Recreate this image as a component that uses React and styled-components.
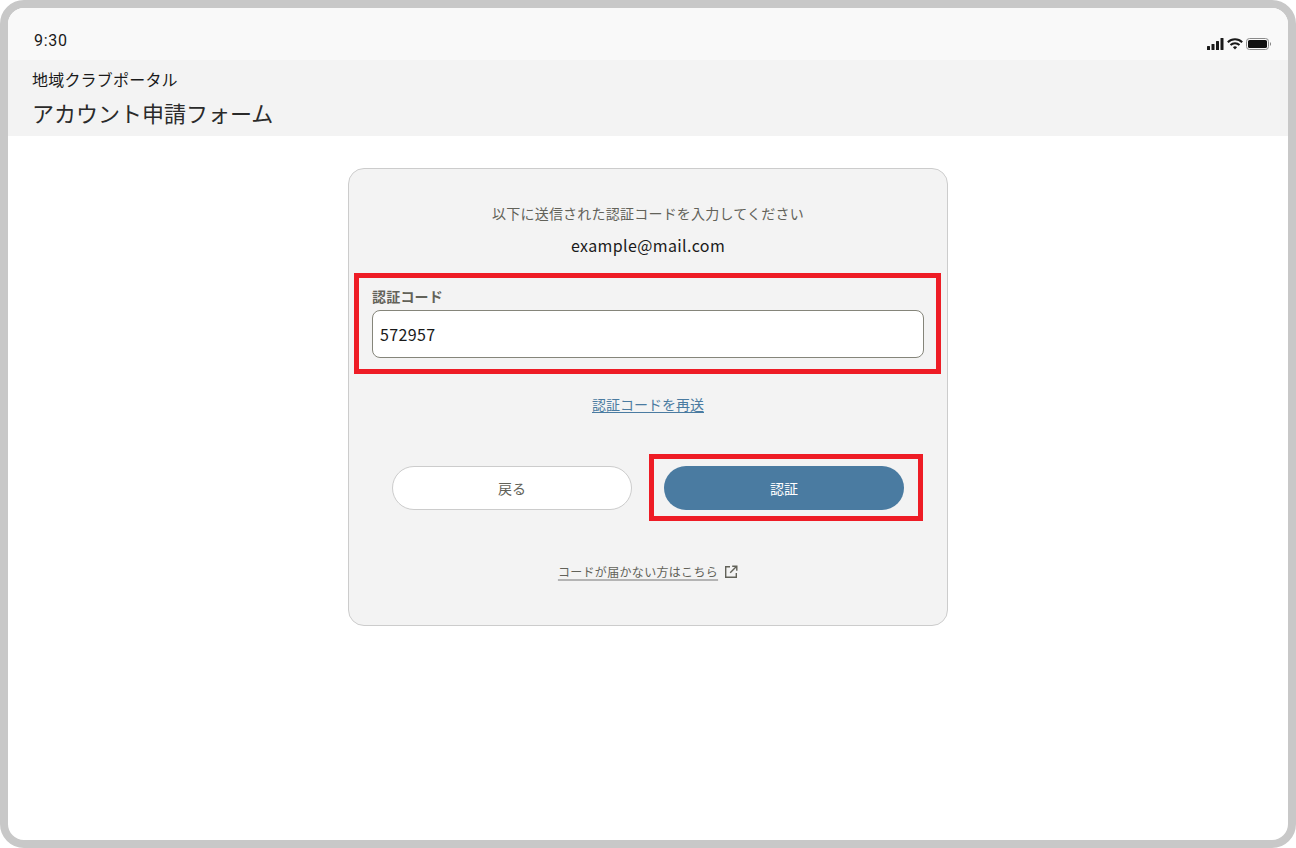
import React from "react";
import styled, { createGlobalStyle } from "styled-components";

const Global = createGlobalStyle`
  html, body { margin: 0; padding: 0; background: #fff; }
  * { box-sizing: border-box; }
  body { font-family: "Noto Sans CJK JP", "Noto Sans", sans-serif; }
`;
const Frame = styled.div`
  width: 1296px; height: 848px; border: 8px solid #c8c8c8; border-radius: 24px;
  background: #fff; overflow: hidden; display: flex; flex-direction: column;
`;
const StatusBar = styled.div`
  height: 52px; background: #f9f9f9; display: flex; justify-content: space-between;
  align-items: flex-start; padding: 23px 17px 0 26px;
`;
const Time = styled.span`
  font: 400 16px/20px Roboto, sans-serif; color: #1a1a1a; letter-spacing: 0.7px;
`;
const StatusIcons = styled.div`
  display: flex; align-items: center; gap: 3px; margin-top: 7px;
`;
const Header = styled.header`
  height: 76px; background: #f3f3f3; padding: 7px 24px 0; display: flex; flex-direction: column;
`;
const Portal = styled.div`
  font-size: 16px; line-height: 24px; color: #1a1a1a; letter-spacing: 0.2px;
`;
const PageTitle = styled.h1`
  margin: 5px 0 0; font-size: 22px; line-height: 32px; font-weight: 400; color: #2a2a2a;
`;
const Main = styled.main`
  flex: 1; display: flex; justify-content: center; padding-top: 32px;
`;
const Card = styled.section`
  width: 600px; height: 458px; background: #f3f3f3; border: 1px solid #ccc; border-radius: 16px;
  display: flex; flex-direction: column; align-items: center; padding: 34px 5px 0;
`;
const Lead = styled.p`
  margin: 0; font-size: 14px; line-height: 20px; color: #626259; letter-spacing: 0.22px;
`;
const Email = styled.p`
  margin: 10px 0 0; font-size: 16px; line-height: 24px; color: #1a1a1a; letter-spacing: 0.38px;
`;
const Highlight = styled.div`
  border: 5px solid #ee1c25;
`;
const FieldBox = styled(Highlight)`
  width: 587px; height: 101px; margin-top: 16px; padding: 8px 13px 0; align-self: flex-start;
`;
const Label = styled.label`
  display: block; font-size: 14px; line-height: 20px; font-weight: 700; color: #626259; letter-spacing: 0.2px;
`;
const CodeInput = styled.input`
  display: block; width: 552px; height: 48px; margin-top: 4px; padding: 0 7px;
  background: #fff; border: 1px solid #85857a; border-radius: 8px; outline: none;
  font: 400 16px "Noto Sans CJK JP", sans-serif; letter-spacing: 0.35px; color: #1a1a1a;
`;
const Resend = styled.a`
  margin-top: 20px; font-size: 14px; line-height: 20px; color: #4a7ba1; text-decoration: underline;
  text-underline-offset: 2px;
`;
const Actions = styled.div`
  align-self: flex-start; display: flex; align-items: center; margin-top: 40px; margin-left: 38px;
`;
const PillButton = styled.button`
  width: 240px; height: 44px; border-radius: 22px; padding: ${p => (p.$primary ? "0 0 1px" : "0")};
  font: 400 14px "Noto Sans CJK JP", sans-serif;
  background: ${p => (p.$primary ? "#4a7ba1" : "#fff")};
  color: ${p => (p.$primary ? "#fff" : "#626259")};
  border: ${p => (p.$primary ? "none" : "1px solid #ccc")};
`;
const ButtonBox = styled(Highlight)`
  width: 274px; height: 67px; margin-left: 17px; padding: 7px 10px;
`;
const Help = styled.div`
  margin-top: 42px; display: flex; align-items: center; gap: 6px; color: #626259;
`;
const HelpLink = styled.a`
  font-size: 12px; line-height: 18px; letter-spacing: 0.32px; color: #626259;
  text-decoration: underline; text-decoration-color: #b4b4b4; text-decoration-thickness: 1.5px;
  text-underline-offset: 2px;
`;

const Signal = () => (
  <svg width="17" height="12" viewBox="0 0 17 12" fill="#1a1a1a">
    <rect x="0" y="8" width="3" height="4" rx="0.6" />
    <rect x="4.5" y="6" width="3" height="6" rx="0.6" />
    <rect x="9" y="3" width="3" height="9" rx="0.6" />
    <rect x="13.5" y="0" width="3" height="12" rx="0.6" />
  </svg>
);
const Wifi = () => (
  <svg width="16" height="12" viewBox="0 0 16 12" fill="none" stroke="#1a1a1a" strokeWidth="2">
    <path d="M0.8 4.2a10.4 10.4 0 0 1 14.4 0" />
    <path d="M3.5 7a6.4 6.4 0 0 1 9 0" />
    <path d="M8 11.6 L5.9 9.2a3 3 0 0 1 4.2 0Z" fill="#1a1a1a" stroke="none" />
  </svg>
);
const Battery = () => (
  <svg width="25" height="12" viewBox="0 0 25 12">
    <rect x="0.5" y="0.5" width="22" height="11" rx="3" fill="none" stroke="#8a8a8a" />
    <rect x="2" y="2" width="19" height="8" rx="1.6" fill="#111" />
    <path d="M24 4.2v3.6a1.9 1.9 0 0 0 0-3.6Z" fill="#8a8a8a" />
  </svg>
);
const ExternalIcon = () => (
  <svg width="14" height="14" viewBox="0 0 14 14" fill="none" stroke="#626259" strokeWidth="1.4">
    <path d="M6 1.7H1.7v10.6h10.6V8" />
    <path d="M6.2 7.8 12.4 1.6M8.2 1.2h4.6v4.6" />
  </svg>
);

export default function App() {
  return (
    <Frame>
      <Global />
      <StatusBar>
        <Time>9:30</Time>
        <StatusIcons><Signal /><Wifi /><Battery /></StatusIcons>
      </StatusBar>
      <Header>
        <Portal>地域クラブポータル</Portal>
        <PageTitle>アカウント申請フォーム</PageTitle>
      </Header>
      <Main>
        <Card>
          <Lead>以下に送信された認証コードを入力してください</Lead>
          <Email>example@mail.com</Email>
          <FieldBox>
            <Label>認証コード</Label>
            <CodeInput defaultValue="572957" />
          </FieldBox>
          <Resend>認証コードを再送</Resend>
          <Actions>
            <PillButton>戻る</PillButton>
            <ButtonBox><PillButton $primary>認証</PillButton></ButtonBox>
          </Actions>
          <Help>
            <HelpLink>コードが届かない方はこちら</HelpLink>
            <ExternalIcon />
          </Help>
        </Card>
      </Main>
    </Frame>
  );
}
